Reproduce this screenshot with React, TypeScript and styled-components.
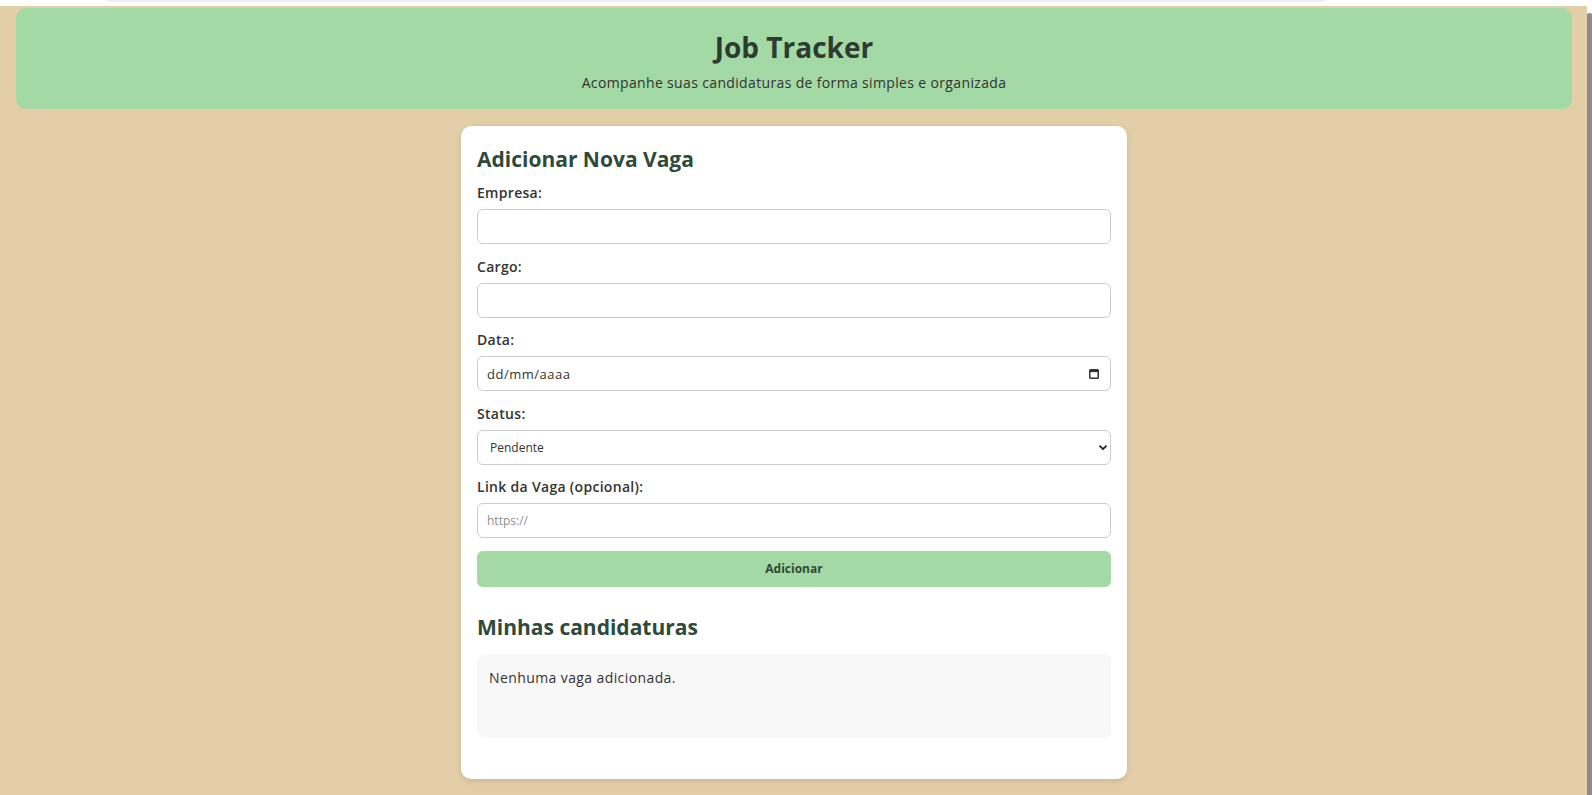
import React from "react";
import styled, { createGlobalStyle } from "styled-components";

const GlobalStyle = createGlobalStyle`
  html, body {
    margin: 0;
    padding: 0;
  }
  body {
    background: #e3cfa7;
    font-family: "Open Sans", "Noto Sans", sans-serif;
    color: #333;
  }
  * { box-sizing: border-box; }
`;

const Frame = styled.div`
  display: flex;
  min-height: 100vh;
`;

const Viewport = styled.div`
  flex: 1;
  display: flex;
  flex-direction: column;
  min-width: 0;
`;

const TopStrip = styled.div`
  height: 6px;
  background: #ffffff;
  padding-left: 107px;
`;

const TopBar = styled.div`
  width: 1218px;
  height: 2px;
  background: #eceef2;
  border-radius: 0 0 3px 3px;
`;

const Scrollbar = styled.div`
  width: 5px;
  background: #ffffff;
  padding-top: 13px;
  display: flex;
  justify-content: center;
`;

const ScrollThumb = styled.div`
  width: 3px;
  flex: 1;
  background: #8c8c8c;
  border-radius: 2px 2px 0 0;
`;

const Page = styled.div`
  padding: 2px 15px 17px 16px;
`;

const Header = styled.header`
  background: #a3d9a5;
  border-radius: 10px;
  padding: 20px 0 16px;
  text-align: center;
`;

const AppTitle = styled.h1`
  margin: 0;
  font-size: 28px;
  line-height: 38px;
  font-weight: 700;
  color: #2e3b31;
`;

const Subtitle = styled.p`
  margin: 7px 0 0;
  font-size: 14px;
  line-height: 20px;
  letter-spacing: 0.35px;
  color: #333;
`;

const Card = styled.main`
  width: 666px;
  margin: 17px auto 0;
  background: #ffffff;
  border-radius: 10px;
  padding: 18px 16px 41px;
  box-shadow: 0 2px 6px rgba(0, 0, 0, 0.12);
`;

const SectionTitle = styled.h2<{ $spaced?: boolean }>`
  margin: ${(p) => (p.$spaced ? "25px 0 12px" : "0 0 9px")};
  font-size: 21px;
  line-height: 30px;
  font-weight: 700;
  color: #2e4a3b;
`;

const Field = styled.div`
  margin-bottom: 12.5px;
`;

const Label = styled.label`
  display: block;
  font-size: 14px;
  line-height: 20px;
  font-weight: 600;
  letter-spacing: 0.3px;
  color: #333;
  margin-bottom: 6px;
`;

const TextInput = styled.input`
  display: block;
  width: 100%;
  height: 35px;
  border: 1px solid #cccccc;
  border-radius: 6px;
  padding: 0 9px;
  font-family: inherit;
  font-size: 12px;
  color: #333;
  background: #fff;
  outline: none;

  &::placeholder {
    color: #8f8f8f;
  }
`;

const DateBox = styled.div`
  display: flex;
  align-items: center;
  height: 35px;
  border: 1px solid #cccccc;
  border-radius: 6px;
  padding: 0 11px 0 9px;
  background: #fff;
`;

const DateInput = styled.input`
  flex: 1;
  border: none;
  outline: none;
  padding: 0;
  font-family: inherit;
  font-size: 13px;
  letter-spacing: 0.5px;
  color: #333;
  background: transparent;

  &::placeholder {
    color: #333;
  }
`;

const SelectWrap = styled.div`
  position: relative;
`;

const Select = styled.select`
  display: block;
  width: 100%;
  height: 35px;
  border: 1px solid #cccccc;
  border-radius: 6px;
  padding: 0 12px;
  font-family: inherit;
  font-size: 12px;
  color: #333;
  background: #fff;
  appearance: none;
  outline: none;
`;

const Chevron = styled.svg`
  position: absolute;
  right: 4px;
  top: 50%;
  width: 8px;
  height: 6px;
  margin-top: -2px;
  pointer-events: none;
`;

const SubmitButton = styled.button`
  display: block;
  width: 100%;
  height: 36px;
  margin-top: 0.5px;
  border: none;
  border-radius: 6px;
  background: #a3d9a5;
  font-family: inherit;
  font-size: 12px;
  font-weight: 700;
  color: #2e4a3b;
  cursor: pointer;
`;

const EmptyList = styled.div`
  height: 84px;
  background: #f8f8f8;
  border-radius: 8px;
  padding: 14px 12px;
  font-size: 14px;
  line-height: 20px;
  letter-spacing: 0.4px;
  color: #333;
`;

const CalendarIcon = () => (
  <svg width="10" height="11" viewBox="0 0 10 11" aria-hidden="true">
    <rect x="0.75" y="1.75" width="8.5" height="8.5" rx="0.8" fill="none" stroke="#333" strokeWidth="1.5" />
    <rect x="0.75" y="1.75" width="8.5" height="2.4" fill="#333" />
  </svg>
);

export default function App() {
  return (
    <>
      <GlobalStyle />
      <Frame>
        <Viewport>
          <TopStrip>
            <TopBar />
          </TopStrip>
          <Page>
            <Header>
              <AppTitle>Job Tracker</AppTitle>
              <Subtitle>Acompanhe suas candidaturas de forma simples e organizada</Subtitle>
            </Header>
            <Card>
              <SectionTitle>Adicionar Nova Vaga</SectionTitle>
              <form onSubmit={(e) => e.preventDefault()}>
                <Field>
                  <Label htmlFor="empresa">Empresa:</Label>
                  <TextInput id="empresa" type="text" />
                </Field>
                <Field>
                  <Label htmlFor="cargo">Cargo:</Label>
                  <TextInput id="cargo" type="text" />
                </Field>
                <Field>
                  <Label htmlFor="data">Data:</Label>
                  <DateBox>
                    <DateInput id="data" type="text" placeholder="dd/mm/aaaa" />
                    <CalendarIcon />
                  </DateBox>
                </Field>
                <Field>
                  <Label htmlFor="status">Status:</Label>
                  <SelectWrap>
                    <Select id="status" defaultValue="Pendente">
                      <option>Pendente</option>
                      <option>Entrevista</option>
                      <option>Aprovado</option>
                      <option>Recusado</option>
                    </Select>
                    <Chevron viewBox="0 0 8 6" aria-hidden="true">
                      <path d="M1 1.2 L4 4.2 L7 1.2" fill="none" stroke="#222" strokeWidth="1.8" strokeLinecap="round" strokeLinejoin="round" />
                    </Chevron>
                  </SelectWrap>
                </Field>
                <Field>
                  <Label htmlFor="link">Link da Vaga (opcional):</Label>
                  <TextInput id="link" type="url" placeholder="https://" />
                </Field>
                <SubmitButton type="submit">Adicionar</SubmitButton>
              </form>
              <SectionTitle $spaced>Minhas candidaturas</SectionTitle>
              <EmptyList>Nenhuma vaga adicionada.</EmptyList>
            </Card>
          </Page>
        </Viewport>
        <Scrollbar>
          <ScrollThumb />
        </Scrollbar>
      </Frame>
    </>
  );
}
